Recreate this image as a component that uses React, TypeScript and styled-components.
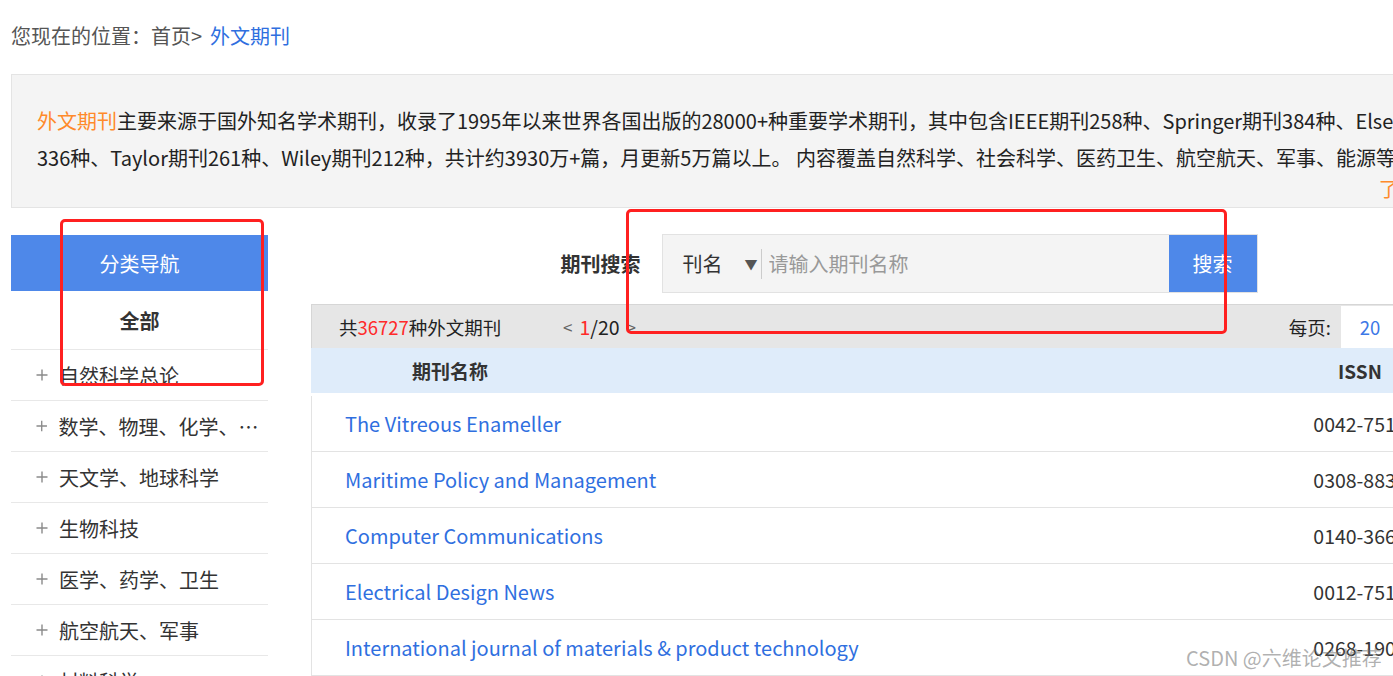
import React from "react";
import styled, { createGlobalStyle } from "styled-components";

const GlobalStyle = createGlobalStyle`
  html, body {
    margin: 0;
    padding: 0;
    overflow: hidden;
    background: #ffffff;
  }
  body {
    font-family: "Noto Sans CJK SC", "Noto Sans", sans-serif;
    color: #333333;
    text-spacing-trim: space-all;
  }
`;

const categories = [
  "自然科学总论",
  "数学、物理、化学、力学",
  "天文学、地球科学",
  "生物科技",
  "医学、药学、卫生",
  "航空航天、军事",
  "材料科学",
  "工业技术",
];

const journals = [
  { name: "The Vitreous Enameller", issn: "0042-7518" },
  { name: "Maritime Policy and Management", issn: "0308-8839" },
  { name: "Computer Communications", issn: "0140-3664" },
  { name: "Electrical Design News", issn: "0012-7515" },
  { name: "International journal of materials & product technology", issn: "0268-1900" },
  { name: "Journal of Materials Science", issn: "0022-2461" },
];

const PlusIcon = () => (
  <svg width="12" height="12" viewBox="0 0 12 12">
    <path d="M6 0.5v11M0.5 6h11" stroke="#8a8a8a" strokeWidth="1.4" />
  </svg>
);

const App = () => {
  return (
    <Page>
      <GlobalStyle />
      <Breadcrumb>
        您现在的位置：首页&gt;<Current>外文期刊</Current>
      </Breadcrumb>

      <Intro>
        <IntroLine>
          <Accent>外文期刊</Accent>主要来源于国外知名学术期刊，收录了1995年以来世界各国出版的28000+种重要学术期刊，其中包含IEEE期刊258种、Springer期刊384种、Elsevier期刊1105种、Emerald期刊
        </IntroLine>
        <IntroLine>
          336种、Taylor期刊261种、Wiley期刊212种，共计约3930万+篇，月更新5万篇以上。 内容覆盖自然科学、社会科学、医药卫生、航空航天、军事、能源等领域。
        </IntroLine>
        <More>了解更多&gt;&gt;</More>
      </Intro>

      <Content>
        <Sidebar>
          <SideHead>分类导航</SideHead>
          <AllRow>全部</AllRow>
          {categories.map((c) => (
            <SideItem key={c}>
              <PlusIcon />
              <SideText>{c}</SideText>
            </SideItem>
          ))}
        </Sidebar>

        <Main>
          <SearchRow>
            <SearchLabel>期刊搜索</SearchLabel>
            <SearchBox>
              <Select>
                刊名<Arrow>▼</Arrow>
              </Select>
              <Divider />
              <SearchInput placeholder="请输入期刊名称" />
              <SearchButton type="button">搜索</SearchButton>
            </SearchBox>
          </SearchRow>

          <Toolbar>
            <Count>
              共<Red>36727</Red>种外文期刊
            </Count>
            <Pager>
              <PagerArrow>&lt;</PagerArrow>
              <Red>1</Red>/20
              <PagerArrow>&gt;</PagerArrow>
            </Pager>
            <Spacer />
            <span>每页:</span>
            <PerPage>20</PerPage>
          </Toolbar>

          <TableHead>
            <NameHead>期刊名称</NameHead>
            <IssnCell>ISSN</IssnCell>
            <span />
          </TableHead>

          <TableBody>
            {journals.map((j) => (
              <Row key={j.issn}>
                <JournalLink>{j.name}</JournalLink>
                <IssnValue>{j.issn}</IssnValue>
                <span />
              </Row>
            ))}
          </TableBody>
        </Main>
      </Content>

      <Mark left={60} top={219} width={204} height={167} />
      <Mark left={626} top={209} width={601} height={125} />
      <Watermark>CSDN @六维论文推荐</Watermark>
    </Page>
  );
};

export default App;

const Page = styled.div`
  position: relative;
  width: 1496px;
  padding-left: 11px;
  height: 676px;
  overflow: hidden;
`;

const Breadcrumb = styled.div`
  padding-top: 21px;
  height: 30px;
  line-height: 30px;
  margin-bottom: 23px;
  font-size: 20px;
  color: #555555;
`;

const Current = styled.span`
  color: #2f6fdf;
  margin-left: 8px;
`;

const Intro = styled.div`
  background: #f4f4f4;
  border: 1px solid #e4e4e4;
  padding: 27px 25px 5px 25px;
  font-size: 20px;
  color: #222222;
`;

const IntroLine = styled.div`
  line-height: 37px;
  white-space: nowrap;
`;

const Accent = styled.span`
  color: #ff8a2b;
`;

const More = styled.div`
  text-align: right;
  line-height: 26px;
  color: #ff8a2b;
`;

const Content = styled.div`
  display: flex;
  margin-top: 26px;
`;

const Sidebar = styled.div`
  width: 257px;
  flex: none;
`;

const SideHead = styled.div`
  height: 56px;
  margin-top: 1px;
  background: #4e88e9;
  color: #ffffff;
  font-size: 20px;
  display: flex;
  align-items: center;
  justify-content: center;
`;

const AllRow = styled.div`
  height: 58px;
  border-bottom: 1px solid #e8e8e8;
  display: flex;
  align-items: center;
  justify-content: center;
  font-size: 20px;
  font-weight: 700;
  color: #333333;
`;

const SideItem = styled.div`
  height: 50px;
  border-bottom: 1px solid #e8e8e8;
  display: flex;
  align-items: center;
  padding: 0 0 0 25px;
  gap: 11px;
`;

const SideText = styled.span`
  font-size: 20px;
  color: #333333;
  white-space: nowrap;
  overflow: hidden;
  text-overflow: ellipsis;
`;

const Main = styled.div`
  width: 1196px;
  flex: none;
  margin-left: 43px;
`;

const SearchRow = styled.div`
  display: flex;
  align-items: center;
  justify-content: center;
  height: 59px;
  margin-bottom: 11px;
`;

const SearchLabel = styled.span`
  font-size: 20px;
  font-weight: 700;
  color: #333333;
  margin-right: 21px;
`;

const SearchBox = styled.div`
  width: 596px;
  height: 59px;
  box-sizing: border-box;
  border: 1px solid #e2e2e2;
  background: #f4f4f4;
  display: flex;
  align-items: center;
`;

const Select = styled.div`
  padding-left: 20px;
  font-size: 20px;
  color: #333333;
  display: flex;
  align-items: center;
`;

const Arrow = styled.span`
  font-size: 13px;
  color: #555555;
  margin-left: 22px;
`;

const Divider = styled.span`
  width: 1px;
  height: 30px;
  background: #cccccc;
  margin-left: 3px;
`;

const SearchInput = styled.input`
  flex: 1;
  min-width: 0;
  border: none;
  outline: none;
  background: transparent;
  margin-left: 7px;
  padding: 0;
  font-family: inherit;
  font-size: 20px;
  color: #333333;

  &::placeholder {
    color: #999999;
  }
`;

const SearchButton = styled.button`
  width: 88px;
  height: 100%;
  border: none;
  background: #4e88e9;
  color: #ffffff;
  font-family: inherit;
  font-size: 20px;
  padding: 0;
`;

const Toolbar = styled.div`
  height: 44px;
  box-sizing: border-box;
  border: 1px solid #d6d6d6;
  border-bottom: none;
  background: #e6e6e6;
  display: flex;
  align-items: center;
  padding-left: 27px;
  font-size: 18.5px;
  color: #222222;
`;

const Count = styled.span`
  width: 224px;
`;

const Red = styled.span`
  color: #ff2a2a;
`;

const Pager = styled.span`
  display: flex;
  align-items: center;
  font-size: 19.5px;
`;

const PagerArrow = styled.span`
  color: #666666;
  margin: 0 7px;
  font-size: 17px;

  &:first-child {
    margin-left: 0;
  }
`;

const Spacer = styled.span`
  flex: 1;
`;

const PerPage = styled.span`
  align-self: flex-end;
  width: 58px;
  height: 42px;
  margin: 0 107px 0 10px;
  background: #ffffff;
  color: #3c78e6;
  display: flex;
  align-items: center;
  justify-content: center;
`;

const TableHead = styled.div`
  height: 45px;
  background: #dfecfa;
  display: grid;
  grid-template-columns: 1fr 190px 52px;
  align-items: center;
  font-size: 19px;
  font-weight: 700;
  color: #333333;
`;

const NameHead = styled.span`
  padding-left: 101px;
`;

const IssnCell = styled.span`
  text-align: center;
`;

const TableBody = styled.div`
  margin-top: 3px;
  border-left: 1px solid #e3e3e3;
`;

const Row = styled.div`
  height: 55px;
  border-bottom: 1px solid #e3e3e3;
  display: grid;
  grid-template-columns: 1fr 190px 52px;
  align-items: center;
`;

const JournalLink = styled.a`
  padding-left: 33px;
  font-size: 20px;
  color: #2f6fdf;
  text-decoration: none;
`;

const IssnValue = styled.span`
  text-align: center;
  font-size: 19.5px;
  color: #333333;
`;

const Mark = styled.div<{ left: number; top: number; width: number; height: number }>`
  position: absolute;
  left: ${({ left }) => left}px;
  top: ${({ top }) => top}px;
  width: ${({ width }) => width}px;
  height: ${({ height }) => height}px;
  box-sizing: border-box;
  border: 3px solid #ff2020;
  border-radius: 5px;
  pointer-events: none;
`;

const Watermark = styled.div`
  position: absolute;
  left: 1186px;
  top: 644px;
  font-size: 20px;
  line-height: 28px;
  color: rgba(110, 110, 110, 0.55);
  white-space: nowrap;
`;
